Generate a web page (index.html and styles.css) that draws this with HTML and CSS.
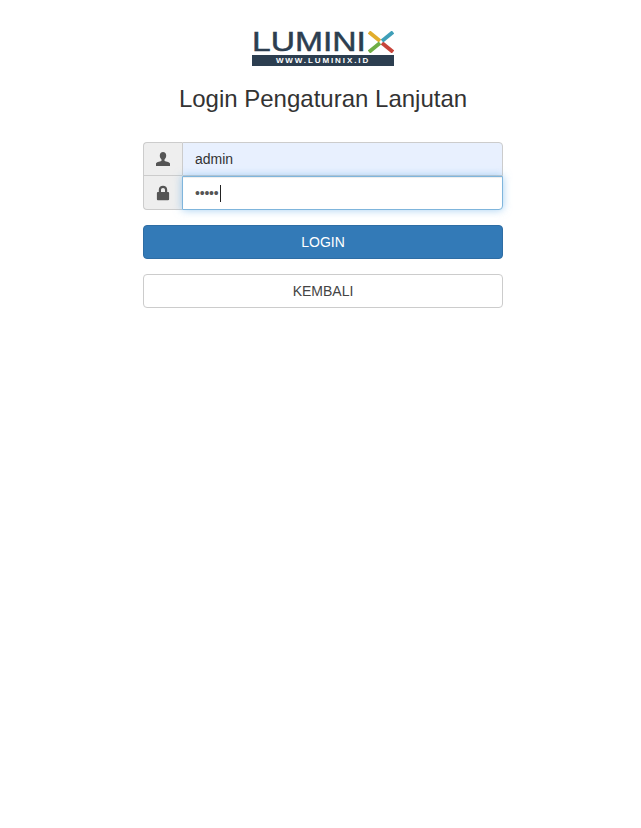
FILE: index.html
```html
<!DOCTYPE html>
<html lang="id">
<head>
<meta charset="utf-8">
<title>Login Pengaturan Lanjutan</title>
<link rel="stylesheet" href="styles.css">
</head>
<body>
<main class="page">
  <div class="logo">
    <div class="logo-word">
      <span class="logo-letters">LUMINI</span>
      <svg class="logo-x" viewBox="0 0 26 22" aria-hidden="true">
        <path d="M1 1 L12 10" stroke="#e2ad2c" stroke-width="3.800" fill="none"/>
        <path d="M14 12 L25 21" stroke="#c8443a" stroke-width="3.800" fill="none"/>
        <path d="M25 1 L14 10" stroke="#3f9fb8" stroke-width="3.800" fill="none"/>
        <path d="M12 12 L1 21" stroke="#6fae45" stroke-width="3.800" fill="none"/>
      </svg>
    </div>
    <div class="logo-url">WWW.LUMINIX.ID</div>
  </div>
  <h1 class="title">Login Pengaturan Lanjutan</h1>
  <form class="form">
    <div class="field">
      <span class="addon addon-top">
        <svg class="icon" viewBox="0 0 16 16" aria-hidden="true"><path d="M4.800 4.600C4.800 2.400 6.100 1 8 1s3.200 1.400 3.200 3.600c0 1.600-.6 3-1.700 3.800v1.300c0 .6 5.200 1.200 5.500 2.800V15H1v-2.500c.3-1.600 5.500-2.200 5.500-2.800V8.400C5.400 7.600 4.800 6.200 4.800 4.600z" fill="#555"/></svg>
      </span>
      <div class="input input-filled">admin</div>
    </div>
    <div class="field">
      <span class="addon addon-bottom">
        <svg class="icon" viewBox="0 0 16 16" aria-hidden="true"><path d="M3.800 7V4.800C3.800 2.400 5.600 .8 8 .8s4.200 1.600 4.200 4V7h1c.5 0 .9.400.9.900v6.400c0 .5-.4.900-.9.900H2.800c-.5 0-.9-.4-.9-.9V7.900c0-.5.400-.9.900-.9zM6 7h4V4.800C10 3.700 9.200 2.900 8 2.900s-2 .8-2 1.900z" fill="#555"/></svg>
      </span>
      <div class="input input-focus"><span class="dots">•••••</span><span class="caret"></span></div>
    </div>
    <button type="button" class="btn btn-primary">LOGIN</button>
    <button type="button" class="btn btn-default">KEMBALI</button>
  </form>
</main>
</body>
</html>
```
FILE: styles.css
```css
* { box-sizing: border-box; }
html, body { margin: 0; padding: 0; background: #fff; }
body { font-family: "Liberation Sans", Arial, sans-serif; color: #333; height: 828px; overflow: hidden; }
.page { width: 360px; margin-left: 143px; padding-top: 31px; }
.logo { width: 142px; margin: 0 auto; display: flex; flex-direction: column; align-items: stretch; }
.logo-word { display: flex; align-items: center; justify-content: space-between; height: 22px; }
.logo-letters { font-size: 28px; line-height: 22px; color: #2c3e50; font-weight: 400; -webkit-text-stroke: .5px #2c3e50; transform: scaleX(1.2); transform-origin: left center; }
.logo-x { width: 26px; height: 22px; flex: none; }
.logo-url { height: 11px; margin-top: 2px; background: #2c3e50; color: #fff; font-size: 8px; line-height: 11px; font-weight: 700; letter-spacing: 1.9px; text-align: center; }
.title { margin: 19px 0 0; font-size: 24px; line-height: 28px; font-weight: 400; text-align: center; color: #333; }
.form { margin-top: 29px; display: flex; flex-direction: column; }
.field { display: flex; height: 34px; }
.addon { width: 39px; flex: none; display: flex; align-items: center; justify-content: center; background: #eee; border: 1px solid #ccc; border-right: 0; }
.addon-top { border-radius: 4px 0 0 0; }
.addon-bottom { border-radius: 0 0 0 4px; border-top: 0; }
.icon { width: 16px; height: 16px; }
.input { flex: 1; display: flex; align-items: center; padding: 0 12px; font-size: 14px; color: #333; border: 1px solid #ccc; }
.input-filled { background: #e8f0fe; border-radius: 0 4px 0 0; }
.input-focus { background: #fff; border-color: #7fb5dc; border-radius: 0 0 4px 0; box-shadow: inset 0 1px 1px rgba(0,0,0,.075), 0 0 8px rgba(102,175,233,.6); }
.dots { font-size: 14px; letter-spacing: -.2px; color: #555; }
.caret { width: 1px; height: 17px; background: #222; margin-left: 1px; }
.btn { display: block; width: 100%; font-family: inherit; font-size: 14px; line-height: 20px; padding: 6px 12px; border-radius: 4px; border: 1px solid; text-align: center; }
.btn-primary { margin-top: 15px; height: 34px; color: #fff; background: #337ab7; border-color: #2e6da4; }
.btn-default { margin-top: 15px; height: 34px; color: #444; background: #fff; border-color: #ccc; }
```
